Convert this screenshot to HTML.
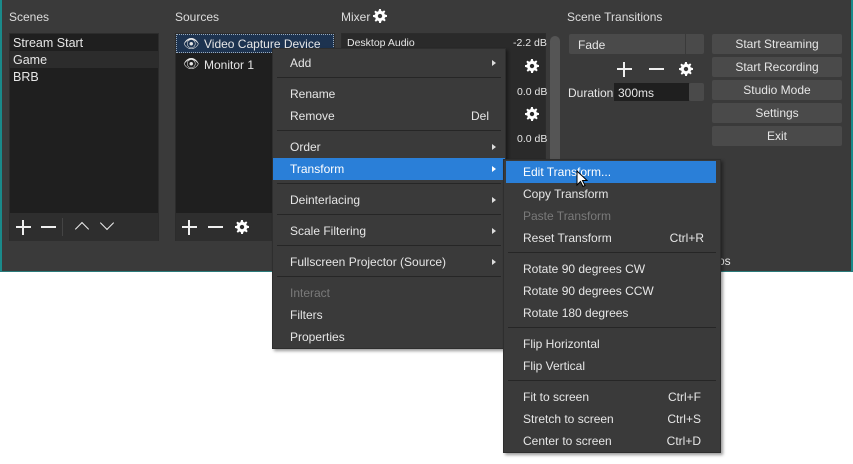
<!DOCTYPE html><html><head><style>
*{margin:0;padding:0;box-sizing:border-box}
body{width:853px;height:464px;background:#fff;font-family:"Liberation Sans",sans-serif;font-size:12px;color:#e6e6e6;position:relative;overflow:hidden}
.a{position:absolute;white-space:nowrap}
#win{position:absolute;left:0;top:0;width:853px;height:272px;background:#3a3a3a}
.panel{position:absolute;background:#1f1f1f;border:1px solid #2c2c2c}
.tb{position:absolute;background:#2e2e2e}
.btn{position:absolute;left:712px;width:130px;height:20px;background:#4a4a4a;border-radius:2px;text-align:center;line-height:20px;color:#e6e6e6}
.menu{position:absolute;background:#3a3a3a;border:1px solid #2e2e2e;box-shadow:2px 2px 3px rgba(0,0,0,.4)}
.it{position:absolute;left:0;right:0;height:22px;line-height:22px;padding-left:17px}
.sep{position:absolute;left:4px;right:4px;height:1px;background:#262626}
.hl{background:#2a7fd8;color:#fff}
.sc{position:absolute;right:16px;top:0}
.ar{position:absolute;right:9px;top:8px;width:0;height:0;border-left:4px solid #ddd;border-top:3px solid transparent;border-bottom:3px solid transparent}
.dis{color:#7a7a7a}
.gear{position:absolute;width:14px;height:14px}
.ph{position:absolute;width:15px;height:2px;background:#eee}
.pv{position:absolute;width:2px;height:15px;background:#eee}
</style></head><body>
<div id="win">
<div class="a" style="left:0;top:0;width:2px;height:272px;background:#1a8a8a"></div>
<div class="a" style="left:851px;top:0;width:2px;height:272px;background:#1a8a8a"></div>
<div class="a" style="left:0;top:271px;width:853px;height:1px;background:#2a7a7a"></div>
<div class="a" style="left:9px;top:10px;color:#ddd">Scenes</div>
<div class="a" style="left:175px;top:10px;color:#ddd">Sources</div>
<div class="a" style="left:341px;top:10px;color:#ddd">Mixer</div>
<svg class="gear" style="left:373px;top:9px" viewBox="0 0 16 16"><path fill="#fff" d="M7 0h2l.4 2.2 1.5.6 1.8-1.3 1.4 1.4-1.3 1.8.6 1.5L16 7v2l-2.2.4-.6 1.5 1.3 1.8-1.4 1.4-1.8-1.3-1.5.6L9 16H7l-.4-2.2-1.5-.6-1.8 1.3-1.4-1.4 1.3-1.8-.6-1.5L0 9V7l2.2-.4.6-1.5-1.3-1.8 1.4-1.4 1.8 1.3 1.5-.6z"/><circle cx="8" cy="8" r="2.5" fill="#3a3a3a"/></svg>
<div class="a" style="left:567px;top:10px;color:#ddd">Scene Transitions</div>
<div class="panel" style="left:9px;top:33px;width:150px;height:208px"></div>
<div class="a" style="left:10px;top:51px;width:148px;height:17px;background:#2c2c2c"></div>
<div class="a" style="left:13px;top:36px;font-size:12.5px">Stream Start</div>
<div class="a" style="left:13px;top:53px;font-size:12.5px">Game</div>
<div class="a" style="left:13px;top:70px;font-size:12.5px">BRB</div>
<div class="tb" style="left:10px;top:213px;width:148px;height:28px"></div>
<div class="ph" style="left:16px;top:226px"></div><div class="pv" style="left:22px;top:220px"></div>
<div class="ph" style="left:41px;top:226px"></div>
<div class="a" style="left:62px;top:218px;width:1px;height:18px;background:#444"></div>
<div class="a" style="left:77px;top:224px;width:10px;height:10px;border-left:1.5px solid #eee;border-top:1.5px solid #eee;transform:rotate(45deg)"></div>
<div class="a" style="left:102px;top:218px;width:10px;height:10px;border-right:1.5px solid #eee;border-bottom:1.5px solid #eee;transform:rotate(45deg)"></div>
<div class="panel" style="left:175px;top:33px;width:160px;height:208px"></div>
<div class="a" style="left:176px;top:34px;width:158px;height:19px;background:#1d3350;border:1px dotted #9ab"></div>
<div class="a" style="left:183px;top:36px;font-size:13px">👁</div>
<div class="a" style="left:204px;top:37px">Video Capture Device</div>
<div class="a" style="left:183px;top:56px;font-size:13px">👁</div>
<div class="a" style="left:204px;top:58px">Monitor 1</div>
<div class="tb" style="left:176px;top:213px;width:158px;height:28px"></div>
<div class="ph" style="left:182px;top:226px"></div><div class="pv" style="left:188px;top:220px"></div>
<div class="ph" style="left:208px;top:226px"></div>
<svg class="gear" style="left:235px;top:220px" viewBox="0 0 16 16"><path fill="#fff" d="M7 0h2l.4 2.2 1.5.6 1.8-1.3 1.4 1.4-1.3 1.8.6 1.5L16 7v2l-2.2.4-.6 1.5 1.3 1.8-1.4 1.4-1.8-1.3-1.5.6L9 16H7l-.4-2.2-1.5-.6-1.8 1.3-1.4-1.4 1.3-1.8-.6-1.5L0 9V7l2.2-.4.6-1.5-1.3-1.8 1.4-1.4 1.8 1.3 1.5-.6z"/><circle cx="8" cy="8" r="2.5" fill="#2e2e2e"/></svg>
<div class="panel" style="left:341px;top:33px;width:205px;height:208px;background:#2a2a2a"></div>
<div class="a" style="left:347px;top:37px;font-size:10.5px">Desktop Audio</div>
<div class="a" style="left:513px;top:37px;font-size:10.5px">-2.2 dB</div>
<div class="a" style="left:517px;top:86px;font-size:10.5px">0.0 dB</div>
<div class="a" style="left:517px;top:133px;font-size:10.5px">0.0 dB</div>
<svg class="gear" style="left:525px;top:59px" viewBox="0 0 16 16"><path fill="#fff" d="M7 0h2l.4 2.2 1.5.6 1.8-1.3 1.4 1.4-1.3 1.8.6 1.5L16 7v2l-2.2.4-.6 1.5 1.3 1.8-1.4 1.4-1.8-1.3-1.5.6L9 16H7l-.4-2.2-1.5-.6-1.8 1.3-1.4-1.4 1.3-1.8-.6-1.5L0 9V7l2.2-.4.6-1.5-1.3-1.8 1.4-1.4 1.8 1.3 1.5-.6z"/><circle cx="8" cy="8" r="2.5" fill="#2a2a2a"/></svg>
<svg class="gear" style="left:525px;top:107px" viewBox="0 0 16 16"><path fill="#fff" d="M7 0h2l.4 2.2 1.5.6 1.8-1.3 1.4 1.4-1.3 1.8.6 1.5L16 7v2l-2.2.4-.6 1.5 1.3 1.8-1.4 1.4-1.8-1.3-1.5.6L9 16H7l-.4-2.2-1.5-.6-1.8 1.3-1.4-1.4 1.3-1.8-.6-1.5L0 9V7l2.2-.4.6-1.5-1.3-1.8 1.4-1.4 1.8 1.3 1.5-.6z"/><circle cx="8" cy="8" r="2.5" fill="#2a2a2a"/></svg>
<div class="a" style="left:550px;top:36px;width:10px;height:200px;background:#555;border-radius:5px"></div>
<div class="a" style="left:569px;top:34px;width:135px;height:20px;background:#4a4a4a;border-radius:2px"></div>
<div class="a" style="left:578px;top:38px">Fade</div>
<div class="a" style="left:685px;top:34px;width:1px;height:20px;background:#3a3a3a"></div>
<div class="ph" style="left:617px;top:68px"></div><div class="pv" style="left:623px;top:62px"></div>
<div class="ph" style="left:649px;top:68px"></div>
<svg class="gear" style="left:679px;top:62px" viewBox="0 0 16 16"><path fill="#fff" d="M7 0h2l.4 2.2 1.5.6 1.8-1.3 1.4 1.4-1.3 1.8.6 1.5L16 7v2l-2.2.4-.6 1.5 1.3 1.8-1.4 1.4-1.8-1.3-1.5.6L9 16H7l-.4-2.2-1.5-.6-1.8 1.3-1.4-1.4 1.3-1.8-.6-1.5L0 9V7l2.2-.4.6-1.5-1.3-1.8 1.4-1.4 1.8 1.3 1.5-.6z"/><circle cx="8" cy="8" r="2.5" fill="#3a3a3a"/></svg>
<div class="a" style="left:568px;top:86px">Duration</div>
<div class="a" style="left:614px;top:83px;width:75px;height:18px;background:#1f1f1f"></div>
<div class="a" style="left:618px;top:86px">300ms</div>
<div class="a" style="left:689px;top:83px;width:15px;height:18px;background:#4a4a4a;border-radius:2px"></div>
<div class="btn" style="top:34px">Start Streaming</div>
<div class="btn" style="top:57px">Start Recording</div>
<div class="btn" style="top:80px">Studio Mode</div>
<div class="btn" style="top:103px">Settings</div>
<div class="btn" style="top:126px">Exit</div>
<div class="a" style="left:718px;top:254px">ps</div>
</div>

<div class="menu" style="left:272px;top:48px;width:234px;height:301px">
<div class="it" style="top:3px">Add<span class="ar"></span></div>
<div class="sep" style="top:28px"></div>
<div class="it" style="top:34px">Rename</div>
<div class="it" style="top:56px">Remove<span class="sc">Del</span></div>
<div class="sep" style="top:81px"></div>
<div class="it" style="top:87px">Order<span class="ar"></span></div>
<div class="it hl" style="top:109px">Transform<span class="ar" style="border-left-color:#fff"></span></div>
<div class="sep" style="top:134px"></div>
<div class="it" style="top:140px">Deinterlacing<span class="ar"></span></div>
<div class="sep" style="top:165px"></div>
<div class="it" style="top:171px">Scale Filtering<span class="ar"></span></div>
<div class="sep" style="top:196px"></div>
<div class="it" style="top:202px">Fullscreen Projector (Source)<span class="ar"></span></div>
<div class="sep" style="top:227px"></div>
<div class="it dis" style="top:233px">Interact</div>
<div class="it" style="top:255px">Filters</div>
<div class="it" style="top:277px">Properties</div>
</div>

<div class="menu" style="left:503px;top:159px;width:218px;height:294px">
<div class="it hl" style="top:1px;left:2px;right:4px">Edit Transform...</div>
<div class="it" style="top:23px;padding-left:19px">Copy Transform</div>
<div class="it dis" style="top:45px;padding-left:19px">Paste Transform</div>
<div class="it" style="top:67px;padding-left:19px">Reset Transform<span class="sc">Ctrl+R</span></div>
<div class="sep" style="top:92px"></div>
<div class="it" style="top:98px;padding-left:19px">Rotate 90 degrees CW</div>
<div class="it" style="top:120px;padding-left:19px">Rotate 90 degrees CCW</div>
<div class="it" style="top:142px;padding-left:19px">Rotate 180 degrees</div>
<div class="sep" style="top:167px"></div>
<div class="it" style="top:173px;padding-left:19px">Flip Horizontal</div>
<div class="it" style="top:195px;padding-left:19px">Flip Vertical</div>
<div class="sep" style="top:220px"></div>
<div class="it" style="top:226px;padding-left:19px">Fit to screen<span class="sc" style="right:19px">Ctrl+F</span></div>
<div class="it" style="top:248px;padding-left:19px">Stretch to screen<span class="sc" style="right:19px">Ctrl+S</span></div>
<div class="it" style="top:270px;padding-left:19px">Center to screen<span class="sc" style="right:19px">Ctrl+D</span></div>
</div>
<svg class="a" style="left:576px;top:170px" width="12" height="18" viewBox="0 0 12 18"><path d="M1 1v14l3.5-3.5 2.5 5 2-1-2.5-5H11z" fill="#fff" stroke="#000" stroke-width="1"/></svg>
</body></html>
